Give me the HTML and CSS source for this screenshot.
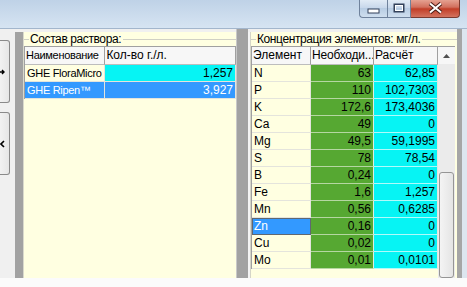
FILE: index.html
```html
<!DOCTYPE html>
<html lang="ru">
<head>
    <meta charset="UTF-8">
    <title>Раствор</title>
    <link rel="stylesheet" href="styles.css">
</head>
<body>
<div class="window">
    <div class="caption">
        <div class="caption-btns">
            <div class="cap-btn cap-min">
                <svg width="14" height="6" viewBox="0 0 14 6"><rect x="1" y="1" width="11" height="4" fill="#fff" stroke="#33415a"/></svg>
            </div>
            <div class="cap-btn cap-max">
                <svg width="12" height="10" viewBox="0 0 12 10"><rect x="1.5" y="1.5" width="9" height="7" fill="none" stroke="#33415a" stroke-width="2"/><rect x="2.5" y="2.5" width="7" height="5" fill="none" stroke="#fff"/></svg>
            </div>
            <div class="cap-btn cap-close">
                <svg width="17" height="12" viewBox="0 0 17 12"><path d="M3 1.5 L14 10.5 M14 1.5 L3 10.5" stroke="#4a1d17" stroke-width="4"/><path d="M3 1.5 L14 10.5 M14 1.5 L3 10.5" stroke="#fff" stroke-width="2"/></svg>
            </div>
        </div>
    </div>

    <div class="client">
        <div class="toolstrip">
            <div class="tool-btn">
                <svg width="6" height="6" viewBox="0 0 6 6"><path d="M0 3 H4 M2 1 L4 3 L2 5" stroke="#000" stroke-width="1.4" fill="none"/></svg>
            </div>
            <div class="tool-btn">
                <svg width="5" height="8" viewBox="0 0 5 8"><path d="M4 1 L1 4 L4 7" stroke="#000" stroke-width="1.6" fill="none"/></svg>
            </div>
        </div>
        <div class="splitter"></div>

        <div class="panel panel-left">
            <div class="group">
                <div class="legend"><span>Состав раствора:</span></div>
                <table class="grid grid-mix">
                    <tr class="head">
                        <td class="c-name tight">Наименование</td>
                        <td class="c-qty">Кол-во г./л.</td>
                    </tr>
                    <tr>
                        <td class="tight">GHE FloraMicro</td>
                        <td class="cell-aqua num">1,257</td>
                    </tr>
                    <tr class="selected">
                        <td class="tight">GHE Ripen™</td>
                        <td class="num">3,927</td>
                    </tr>
                </table>
            </div>
        </div>

        <div class="splitter splitter-wide"></div>

        <div class="panel panel-right">
            <div class="group">
                <div class="legend"><span>Концентрация элементов: мг/л.</span></div>
                <div class="grid-wrap">
                    <table class="grid grid-elem">
                        <tr class="head">
                            <td class="c-el">Элемент</td>
                            <td class="c-need">Необходи...</td>
                            <td class="c-calc">Расчёт</td>
                        </tr>
                        <tr><td>N</td><td class="need">63</td><td class="calc">62,85</td></tr>
                        <tr><td>P</td><td class="need">110</td><td class="calc">102,7303</td></tr>
                        <tr><td>K</td><td class="need">172,6</td><td class="calc">173,4036</td></tr>
                        <tr><td>Ca</td><td class="need">49</td><td class="calc">0</td></tr>
                        <tr><td>Mg</td><td class="need">49,5</td><td class="calc">59,1995</td></tr>
                        <tr><td>S</td><td class="need">78</td><td class="calc">78,54</td></tr>
                        <tr><td>B</td><td class="need">0,24</td><td class="calc">0</td></tr>
                        <tr><td>Fe</td><td class="need">1,6</td><td class="calc">1,257</td></tr>
                        <tr><td>Mn</td><td class="need">0,56</td><td class="calc">0,6285</td></tr>
                        <tr><td class="focused">Zn</td><td class="need">0,16</td><td class="calc">0</td></tr>
                        <tr><td>Cu</td><td class="need">0,02</td><td class="calc">0</td></tr>
                        <tr><td>Mo</td><td class="need">0,01</td><td class="calc">0,0101</td></tr>
                    </table>
                    <div class="vscroll">
                        <div class="vs-up">
                            <svg width="7" height="4" viewBox="0 0 7 4"><path d="M0 4 L3.5 0 L7 4 Z" fill="#505050"/></svg>
                        </div>
                        <div class="vs-track"></div>
                        <div class="vs-thumb"></div>
                    </div>
                </div>
            </div>
        </div>

        <div class="edge"></div>
    </div>

    <div class="bottom"></div>
</div>
</body>
</html>
```

FILE: styles.css
```css
        :root {
           --info: #ffffe1;
           --face: #f0f0f0;
           --green: #56a832;
           --aqua: #06f4f4;
           --hilite: #3399ff;
           --line: #e4e4dc;
        }

        body{
            margin: 0;
            font-family: "Liberation Sans", Arial, sans-serif;
            font-size: 12px;
            color: #000;
            background: #fafafa;
        }

        .window{
            width: 467px;
            height: 287px;
            overflow: hidden;
        }

        /* title bar */
        .caption{
            height: 28px;
            background: linear-gradient(#bfd2e7, #d6e4f2);
            border-bottom: 1px solid #a3b6cc;
            display: flex;
            justify-content: flex-end;
        }

        .caption-btns{
            display: flex;
            height: 19px;
            margin-right: 7px;
            margin-top: -1px;
        }

        .cap-btn{
            height: 100%;
            display: flex;
            align-items: center;
            justify-content: center;
            border: 1px solid #6f829c;
            border-top: 0;
            box-sizing: border-box;
        }

        .cap-min{
            width: 28px;
            border-right: 0;
            border-bottom-left-radius: 4px;
            background: linear-gradient(#e4edf7, #c7d7ea 50%, #b7cce3 51%, #cfdeee);
            padding-top: 6px;
        }

        .cap-max{
            width: 24px;
            background: linear-gradient(#e4edf7, #c7d7ea 50%, #b7cce3 51%, #cfdeee);
        }

        .cap-close{
            width: 49px;
            border-left: 0;
            border-bottom-right-radius: 4px;
            border-color: #7a3a30;
            background: linear-gradient(#e8a898, #d2705e 45%, #c23e28 55%, #d3735f);
        }

        /* client area */
        .client{
            height: 249px;
            display: flex;
            background: var(--face);
        }

        .toolstrip{
            width: 15px;
            padding-top: 11px;
            display: flex;
            flex-direction: column;
            gap: 9px;
        }

        .tool-btn{
            width: 10px;
            height: 63px;
            border: 1px solid #8a8a8a;
            border-left: 0;
            border-radius: 0 3px 3px 0;
            background: linear-gradient(90deg, #f2f2f2, #e6e6e6);
            display: flex;
            align-items: center;
            justify-content: flex-start;
            box-sizing: border-box;
        }

        .splitter{
            width: 8px;
            margin-top: 3px;
            background: #a2a2a2;
        }

        .splitter-wide{
            width: 11px;
            margin-top: 0;
            border-left: 1px solid #c8c8c8;
        }

        .panel{
            margin-top: 3px;
            background: var(--info);
            box-sizing: border-box;
        }

        .panel-left{
            width: 213px;
            border-left: 1px solid #d9d9cc;
        }

        .panel-right{
            width: 209px;
            border-left: 2px solid #f4f4f4;
        }

        .edge{
            width: 10px;
            border-left: 5px solid #a6a6a6;
            background: #dde6ef;
            box-sizing: border-box;
        }

        .bottom{
            height: 9px;
            background: #fbfbfb;
        }

        /* group box */
        .group{
            height: 100%;
        }

        .panel-right .group{
            border-left: 1px solid #d5d5c8;
        }

        .legend{
            height: 14px;
            display: flex;
            align-items: center;
            line-height: 14px;
            letter-spacing: -0.4px;
        }

        .legend::before{
            content: "";
            width: 5px;
            border-top: 1px solid #d0d0c4;
        }

        .legend::after{
            content: "";
            flex: 1;
            border-top: 1px solid #d0d0c4;
            margin-left: 1px;
        }

        .legend span{
            padding: 0 1px;
        }

        /* grids */
        .grid{
            border-collapse: separate;
            border-spacing: 0;
            table-layout: fixed;
            border-top: 1px solid #a0a0a0;
            border-left: 1px solid #a0a0a0;
            align-self: flex-start;
        }

        .grid td{
            height: 16px;
            padding: 0 2px;
            border-right: 1px solid var(--line);
            border-bottom: 1px solid var(--line);
            white-space: nowrap;
            overflow: hidden;
            line-height: 16px;
            background: var(--info);
        }

        .grid .head td{
            height: 17px;
            line-height: 17px;
            background: #f7f7f7;
            border-right: 1px solid #a0a0a0;
            border-bottom: 1px solid #bdbdbd;
            padding-left: 1px;
        }

        .grid td.tight{
            font-size: 11px;
            letter-spacing: -0.3px;
        }

        .grid .num, .grid .need, .grid .calc{
            text-align: right;
        }

        .grid-mix{
            width: 212px;
        }

        .c-name{ width: 76px; }
        .c-qty{ width: 126px; }

        .grid td.cell-aqua{
            background: var(--aqua);
        }

        .grid .selected td{
            background: var(--hilite);
            color: #fff;
        }

        .grid-wrap{
            display: flex;
            align-items: flex-start;
        }

        .grid-elem{
            width: 187px;
        }

        .c-el{ width: 55px; }
        .c-need{ width: 59px; letter-spacing: -0.2px; }
        .c-calc{ width: 60px; }

        .grid td.need{
            background: var(--green);
            border-right-color: #dfeede;
            border-bottom-color: #b5d7a2;
        }

        .grid td.calc{
            background: var(--aqua);
            border-bottom-color: #b0fafa;
        }

        .grid td.focused{
            background: var(--hilite);
            color: #fff;
            outline: 1px solid #606870;
            outline-offset: -1px;
        }

        .vscroll{
            width: 17px;
            height: 232px;
            display: flex;
            flex-direction: column;
            background: #ebebeb;
            border-top: 1px solid #a0a0a0;
            box-sizing: border-box;
        }

        .vs-up{
            height: 17px;
            display: flex;
            align-items: center;
            justify-content: center;
            background: #f7f7f7;
        }

        .vs-track{
            height: 108px;
        }

        .vs-thumb{
            flex: 1;
            margin: 0 1px;
            border: 1px solid #959595;
            border-radius: 3px;
            background: linear-gradient(90deg, #f4f4f4, #e4e4e4);
        }
```
